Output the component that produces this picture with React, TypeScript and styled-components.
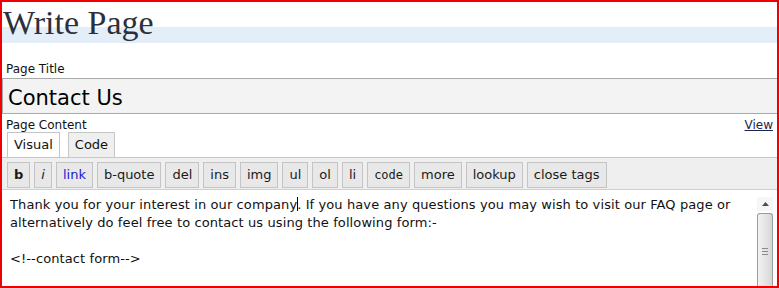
import React from 'react';
import styled, { createGlobalStyle } from 'styled-components';

const GlobalStyle = createGlobalStyle`
  html,
  body {
    margin: 0;
    padding: 0;
    background: #fff;
  }

  body {
    font-family: 'DejaVu Sans', Verdana, sans-serif;
    color: #1a1a1a;
  }
`;

const Frame = styled.div`
  width: 779px;
  height: 288px;
  box-sizing: border-box;
  border: 2px solid #f00000;
  overflow: hidden;
  display: flex;
  flex-direction: column;
`;

const Heading = styled.h1`
  margin: 0;
  height: 41px;
  padding: 2px 0 0 1px;
  box-sizing: border-box;
  font-family: 'Liberation Serif', Georgia, serif;
  font-size: 34px;
  font-weight: normal;
  line-height: 37px;
  color: #2b303c;
  background: linear-gradient(to bottom, #fff 25px, #e3eef9 25px);
`;

const Label = styled.div`
  padding-left: 4px;
  font-size: 12px;
  line-height: 14px;
  color: #111;
`;

const TitleLabel = styled(Label)`
  margin-top: 19px;
  height: 16px;
`;

const TitleInput = styled.input`
  display: block;
  width: 100%;
  height: 36px;
  margin: 0;
  box-sizing: border-box;
  padding: 3px 5px 0;
  border: 1px solid #a9a9a9;
  border-right: none;
  background: #f3f3f3;
  font-family: 'DejaVu Sans', Verdana, sans-serif;
  font-size: 21px;
  color: #000;
  outline: none;
`;

const ContentRow = styled.div`
  display: flex;
  justify-content: space-between;
  align-items: flex-end;
  margin-top: 2px;
  height: 16px;
`;

const ViewLink = styled.a`
  padding-right: 4px;
  font-size: 12px;
  line-height: 14px;
  color: #1c2550;
  text-decoration: underline;
  text-underline-offset: 1px;
`;

const Tabs = styled.div`
  display: flex;
  gap: 8px;
  padding-left: 5px;
`;

const Tab = styled.div<{ $active?: boolean }>`
  height: 25px;
  box-sizing: border-box;
  padding: 0 6px;
  border: 1px solid #c6c6c6;
  border-bottom: none;
  background: ${(p) => (p.$active ? '#efefef' : '#fff')};
  font-size: 13px;
  line-height: 24px;
  color: #111;
`;

const Toolbar = styled.div`
  display: flex;
  gap: 4px;
  height: 33px;
  box-sizing: border-box;
  padding: 4px 5px 0;
  border-top: 1px solid #c6c6c6;
  border-bottom: 1px solid #cfcfcf;
  background: #efefef;
`;

const ToolButton = styled.button<{ $kind?: 'bold' | 'italic' | 'link' | 'mono' }>`
  height: 26px;
  margin: 0;
  padding: 0 6px;
  box-sizing: border-box;
  border: 1px solid #c4c4c4;
  border-radius: 0;
  background: #e8e8e8;
  font-family: ${(p) =>
    p.$kind === 'mono' ? "'DejaVu Sans Mono', 'Liberation Mono', monospace" : "'DejaVu Sans', Verdana, sans-serif"};
  font-size: ${(p) => (p.$kind === 'mono' ? '12px' : '13px')};
  font-weight: ${(p) => (p.$kind === 'bold' ? 'bold' : 'normal')};
  font-style: ${(p) => (p.$kind === 'italic' ? 'italic' : 'normal')};
  color: ${(p) => (p.$kind === 'link' ? '#2020cc' : '#1a1a1a')};
  line-height: 24px;
`;

const Editor = styled.div`
  flex: 1;
  display: flex;
  min-height: 0;
`;

const EditorText = styled.div`
  flex: 1;
  padding: 6px 0 0 8px;
  font-size: 13px;
  line-height: 18px;
  letter-spacing: 0.1px;
  color: #111;
  white-space: pre;
`;

const Caret = styled.span`
  display: inline-block;
  width: 0;
  height: 14px;
  margin-right: -1px;
  border-left: 1px solid #000;
  vertical-align: -2px;
`;

const Scrollbar = styled.div`
  width: 16px;
  margin: 7px 4px 0 0;
  display: flex;
  flex-direction: column;
  gap: 2px;
`;

const ScrollArrow = styled.div`
  height: 14px;
  display: flex;
  align-items: center;
  justify-content: center;
  background: #f6f6f6;
`;

const ScrollThumb = styled.div`
  flex: 1;
  display: flex;
  justify-content: center;
  padding-top: 34px;
  border: 1px solid #9c9c9c;
  border-bottom: none;
  border-radius: 3px 3px 0 0;
  background: linear-gradient(to right, #f2f2f2, #e2e2e2 60%, #d6d6d6);
`;

const buttons: { label: string; kind?: 'bold' | 'italic' | 'link' | 'mono' }[] = [
  { label: 'b', kind: 'bold' },
  { label: 'i', kind: 'italic' },
  { label: 'link', kind: 'link' },
  { label: 'b-quote' },
  { label: 'del' },
  { label: 'ins' },
  { label: 'img' },
  { label: 'ul' },
  { label: 'ol' },
  { label: 'li' },
  { label: 'code', kind: 'mono' },
  { label: 'more' },
  { label: 'lookup' },
  { label: 'close tags' },
];

const App = () => {
  return (
    <React.Fragment>
      <GlobalStyle />
      <Frame>
        <Heading>Write Page</Heading>
        <TitleLabel>Page Title</TitleLabel>
        <TitleInput readOnly value="Contact Us" />
        <ContentRow>
          <Label>Page Content</Label>
          <ViewLink href="#">View</ViewLink>
        </ContentRow>
        <Tabs>
          <Tab>Visual</Tab>
          <Tab $active>Code</Tab>
        </Tabs>
        <Toolbar>
          {buttons.map((b) => (
            <ToolButton key={b.label} $kind={b.kind}>
              {b.label}
            </ToolButton>
          ))}
        </Toolbar>
        <Editor>
          <EditorText>
            Thank you for your interest in our company
            <Caret />
            . If you have any questions you may wish to visit our FAQ page or
            {'\n'}alternatively do feel free to contact us using the following form:-
            {'\n\n'}&lt;!--contact form--&gt;
          </EditorText>
          <Scrollbar>
            <ScrollArrow>
              <svg width="7" height="4" viewBox="0 0 7 4">
                <path d="M0 4 L3.5 0 L7 4 Z" fill="#4d4d4d" />
              </svg>
            </ScrollArrow>
            <ScrollThumb>
              <svg width="6" height="7" viewBox="0 0 6 7">
                <path d="M0 0.5 H6 M0 3.5 H6 M0 6.5 H6" stroke="#8a8a8a" strokeWidth="1" />
              </svg>
            </ScrollThumb>
          </Scrollbar>
        </Editor>
      </Frame>
    </React.Fragment>
  );
};

export default App;
